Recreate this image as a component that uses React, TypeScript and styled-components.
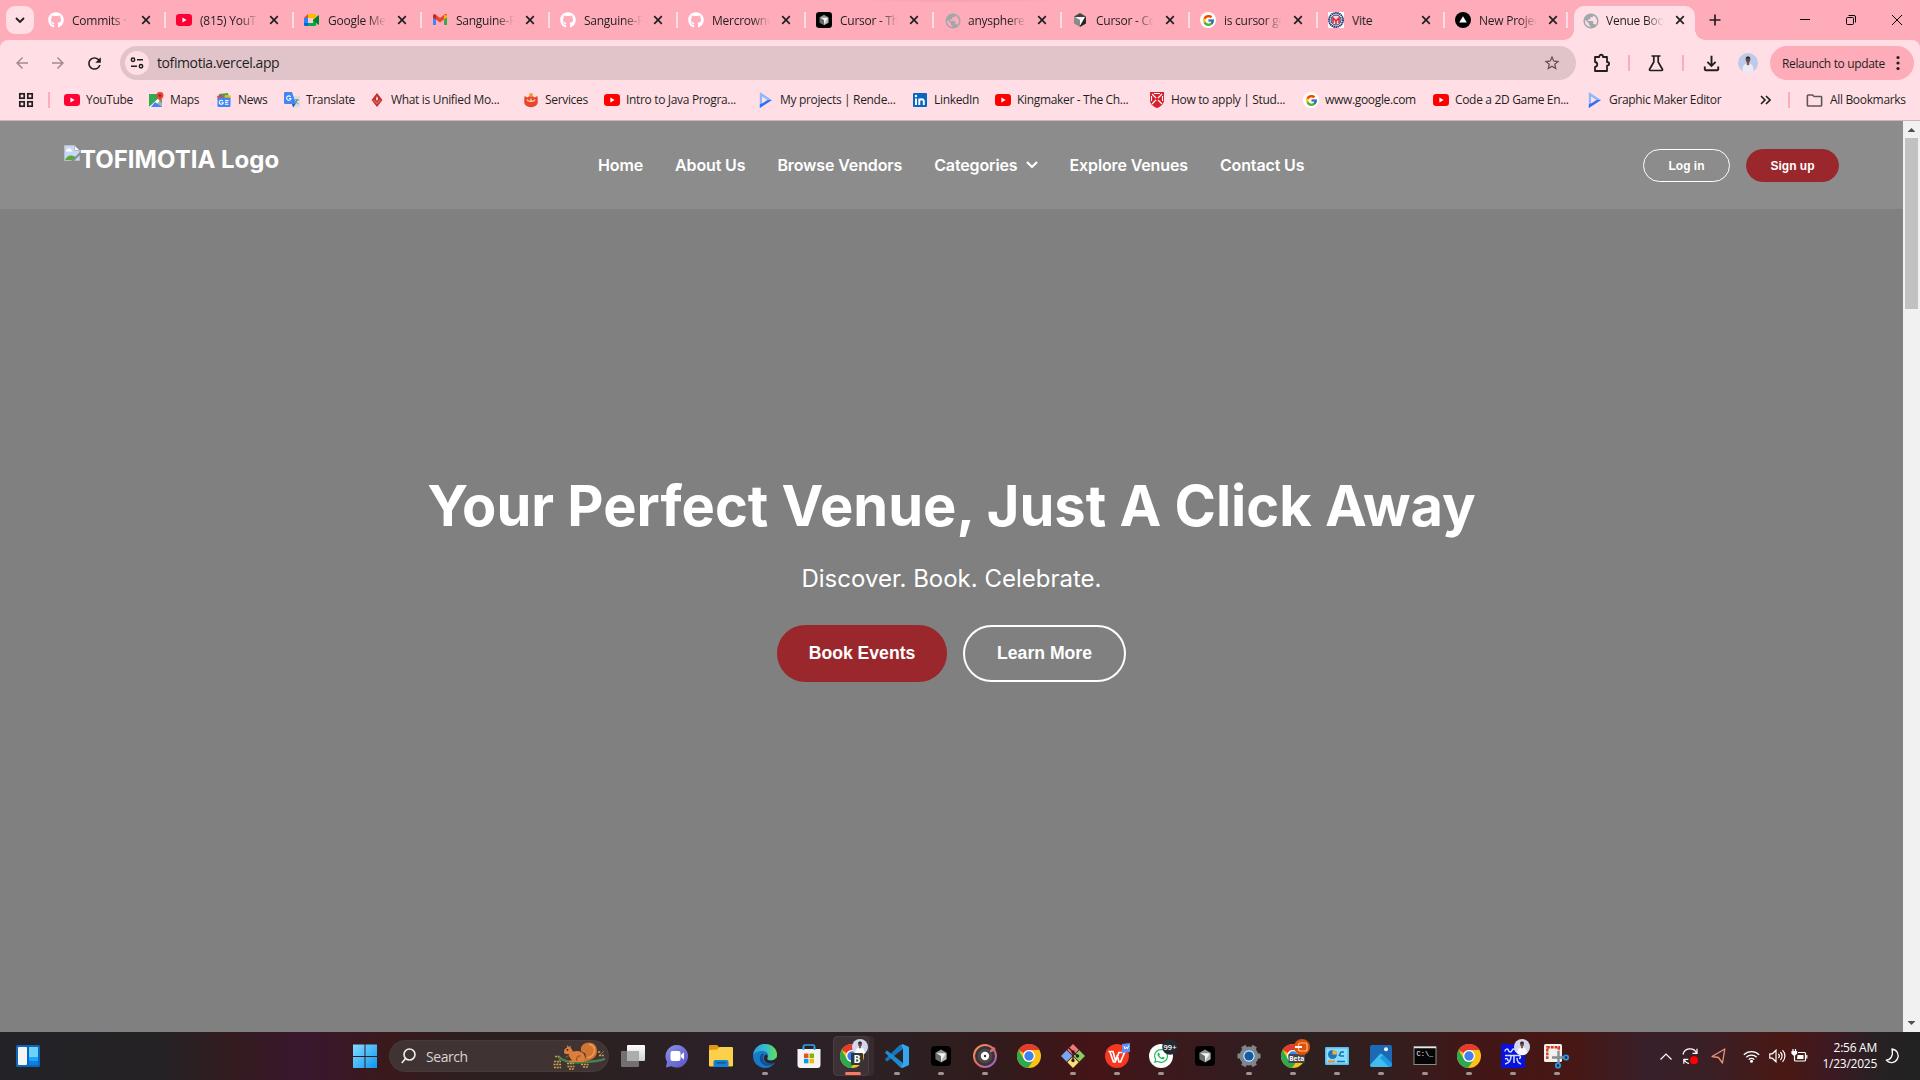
import React from "react";
import styled, { createGlobalStyle, css } from "styled-components";
import { FaGithub, FaWhatsapp } from "react-icons/fa";
import { FcGoogle } from "react-icons/fc";
import {
  MdArrowBack,
  MdArrowForward,
  MdOutlineFileDownload,
  MdOutlineFolder,
  MdPublic,
  MdRefresh,
  MdStarBorder,
} from "react-icons/md";

const UI = `"Segoe UI", "Open Sans", "Noto Sans", sans-serif`;
const ARIAL = `"Liberation Sans", Arial, sans-serif`;

const Global = createGlobalStyle`
  * { box-sizing: border-box; }
  body { margin: 0; overflow: hidden; font-family: ${UI}; }
  svg { display: block; flex: none; }
`;

const Screen = styled.div`
  width: 1920px;
  height: 1080px;
  display: flex;
  flex-direction: column;
  overflow: hidden;
`;

/* ---------- tab strip ---------- */

const TabStrip = styled.div`
  height: 40px;
  flex: none;
  display: flex;
  align-items: stretch;
  padding-left: 6px;
  color: #1f1f1f;
  background:
    radial-gradient(ellipse 112px 3px at 960px 0, #f59fae, transparent) no-repeat,
    #ffacba;
`;

const TabSearch = styled.button`
  width: 28px;
  height: 28px;
  margin: 6px 3px 0 0;
  padding: 0;
  border: 0;
  border-radius: 9px;
  background: #ffdfe5;
  display: grid;
  place-items: center;
`;

const TabItem = styled.div<{ $w: number; $active?: boolean }>`
  width: ${(p) => p.$w}px;
  height: ${(p) => (p.$active ? 34 : 40)}px;
  flex: none;
  display: flex;
  align-items: center;
  padding: 0 8px 0 ${(p) => (p.$active ? 8 : 11)}px;
  position: relative;
  ${(p) =>
    p.$active
      ? css`
          margin: 6px 0 0 7px;
          padding-bottom: 6px;
          border-radius: 10px 10px 0 0;
          background: #ffdfe5;
          &::before,
          &::after {
            content: "";
            position: absolute;
            bottom: 0;
            width: 10px;
            height: 10px;
          }
          &::before {
            left: -10px;
            background: radial-gradient(circle at 0 0, transparent 9.5px, #ffdfe5 10px);
          }
          &::after {
            right: -10px;
            background: radial-gradient(circle at 100% 0, transparent 9.5px, #ffdfe5 10px);
          }
        `
      : css`
          &::after {
            content: "";
            position: absolute;
            right: -1px;
            top: 12px;
            width: 2px;
            height: 16px;
            background: #ffdfe5;
          }
        `}
`;

const TabTitle = styled.span<{ $fade: boolean }>`
  width: 60px;
  margin: 1px 9px 0 8px;
  flex: none;
  white-space: nowrap;
  font-size: 12px;
  letter-spacing: -0.25px;
  line-height: 18px;
  mask-image: ${(p) =>
    p.$fade ? "linear-gradient(90deg, #000 40px, transparent 58px)" : "none"};
`;

const WindowButtons = styled.div`
  margin-left: auto;
  display: flex;
  align-items: center;
`;

const WindowButton = styled.span`
  width: 46px;
  height: 40px;
  display: grid;
  place-items: center;
`;

const NewTab = styled.span`
  width: 20px;
  margin-left: 10px;
  display: grid;
  place-items: center;
`;

/* ---------- toolbar ---------- */

const Chrome = styled.div`
  height: 81px;
  flex: none;
  background: #ffdfe5;
  border-bottom: 1px solid #cfb0b8;
  color: #1f1f1f;
  border-radius: 8px 8px 0 0;
`;

const ChromeBack = styled.div`
  background: linear-gradient(#ffacba 10px, #ffdfe5 10px);
`;

const Toolbar = styled.div`
  height: 46px;
  display: flex;
  align-items: center;
`;

const ToolSlot = styled.span<{ $w: number; $dim?: boolean }>`
  width: ${(p) => p.$w}px;
  flex: none;
  display: grid;
  place-items: center;
  color: ${(p) => (p.$dim ? "#a28c91" : "#1f1f1f")};
`;

const Omnibox = styled.div`
  width: 1456px;
  height: 34px;
  margin-left: 8px;
  padding: 0 15px 0 5px;
  border-radius: 17px;
  background: #e1c4c9;
  display: flex;
  align-items: center;
  flex: none;
`;

const SiteChip = styled.span`
  width: 24px;
  height: 24px;
  border-radius: 50%;
  background: #ffdfe5;
  display: grid;
  place-items: center;
`;

const Url = styled.span`
  flex: 1;
  margin: 0 0 1px 8px;
  font-size: 14px;
  letter-spacing: -0.4px;
`;

const Divider = styled.span`
  width: 2px;
  height: 16px;
  background: #ffacba;
  flex: none;
`;

const Relaunch = styled.div`
  width: 144px;
  height: 34px;
  margin-left: 10px;
  padding: 0 14px 0 12px;
  border-radius: 17px;
  background: #ffacba;
  display: flex;
  align-items: center;
  justify-content: space-between;
  font-size: 12px;
  letter-spacing: -0.35px;
  white-space: nowrap;
`;

const BookmarkBar = styled.div`
  height: 28px;
  display: flex;
  align-items: center;
  padding-left: 18px;
`;

const BookmarkList = styled.div`
  display: flex;
  margin-left: 14px;
  width: 1688px;
`;

const Bookmark = styled.div<{ $w?: number }>`
  width: ${(p) => (p.$w ? p.$w + "px" : "auto")};
  flex: none;
  display: flex;
  align-items: center;
  gap: 6px;
  font-size: 12px;
  letter-spacing: -0.33px;
  line-height: 18px;
  white-space: nowrap;
`;

const IconBox = styled.span`
  width: 16px;
  height: 16px;
  flex: none;
  display: grid;
  place-items: center;
`;

const WhiteDisc = styled.span`
  width: 16px;
  height: 16px;
  border-radius: 50%;
  background: #fff;
  display: grid;
  place-items: center;
`;

/* ---------- web page ---------- */

const Viewport = styled.div`
  height: 911px;
  flex: none;
  display: flex;
`;

const Page = styled.main`
  width: 1903px;
  display: flex;
  flex-direction: column;
  background: #808080;
  color: #fff;
  font-family: Inter, sans-serif;
`;

const SiteHeader = styled.header`
  height: 88px;
  flex: none;
  padding: 0 64px;
  background: #8c8c8c;
  display: grid;
  grid-template-columns: 534px 1fr auto;
  align-items: center;
`;

const Brand = styled.div`
  height: 40px;
  display: flex;
  align-items: flex-start;
  font-size: 24px;
  font-weight: 700;
  line-height: 29px;
  white-space: nowrap;
`;

const SiteNav = styled.nav`
  display: flex;
  gap: 32px;
`;

const NavLink = styled.a`
  display: flex;
  align-items: center;
  gap: 8px;
  font-size: 16px;
  font-weight: 600;
  line-height: 20px;
  letter-spacing: -0.13px;
`;

const Auth = styled.div`
  display: flex;
  gap: 16px;
  margin-top: 1px;
`;

const AuthButton = styled.button<{ $solid?: boolean }>`
  width: ${(p) => (p.$solid ? 93 : 87)}px;
  height: 33px;
  padding: 0;
  border-radius: 17px;
  border: 1px solid ${(p) => (p.$solid ? "#9a272b" : "#fff")};
  background: ${(p) => (p.$solid ? "#9a272b" : "transparent")};
  color: #fff;
  font: 600 12px ${ARIAL};
`;

const Hero = styled.section`
  flex: 1;
  display: flex;
  flex-direction: column;
  align-items: center;
  padding-top: 263px;
`;

const HeroTitle = styled.h1`
  margin: 0;
  font-size: 56px;
  font-weight: 700;
  line-height: 68px;
  white-space: nowrap;
`;

const HeroText = styled.p`
  margin: 24px 0 31px;
  font-size: 24px;
  line-height: 30px;
`;

const HeroActions = styled.div`
  display: flex;
  gap: 16px;
`;

const HeroButton = styled.button<{ $solid?: boolean }>`
  width: ${(p) => (p.$solid ? 170 : 163)}px;
  height: 57px;
  padding: 0;
  border-radius: 29px;
  border: 2px solid ${(p) => (p.$solid ? "#9a272b" : "#fff")};
  background: ${(p) => (p.$solid ? "#9a272b" : "transparent")};
  color: #fff;
  font: 600 17.6px ${ARIAL};
`;

const ScrollTrack = styled.div`
  width: 17px;
  background: #f1f1f1;
  display: flex;
  flex-direction: column;
  align-items: center;
`;

const ScrollThumb = styled.div`
  width: 13px;
  height: 171px;
  background: #c1c1c1;
  margin-bottom: auto;
`;

const ScrollArrow = styled.div<{ $down?: boolean }>`
  width: 17px;
  height: 17px;
  display: grid;
  place-items: center;
  transform: ${(p) => (p.$down ? "scaleY(-1)" : "none")};
`;

/* ---------- taskbar ---------- */

const Taskbar = styled.footer`
  height: 48px;
  flex: none;
  display: flex;
  align-items: center;
  color: #fff;
  background: linear-gradient(
    90deg, #232226 0, #242225 160px, #331b1f 235px, #39172e 305px, #3a191c 385px,
    #2c1f20 470px, #2b2022 620px, #2b212a 760px, #2c2022 900px, #331a1b 1010px,
    #441417 1090px, #391a1d 1190px, #2e2020 1300px, #351d1d 1400px, #421617 1480px,
    #471713 1570px, #38202a 1650px, #3a1f25 1710px, #491813 1785px, #3d1923 1830px,
    #262123 1880px, #222 1920px
  );
`;

const Widgets = styled.span`
  width: 337px;
  padding: 0 0 0 16px;
`;

const StartSlot = styled.span`
  width: 36px;
  padding-left: 16px;
  flex: none;
  margin-right: 16px;
`;

const SearchBox = styled.div`
  width: 220px;
  height: 32px;
  flex: none;
  padding: 0 2px 0 11px;
  border-radius: 16px;
  border: 1px solid #483a3b;
  background: #403334;
  display: flex;
  align-items: center;
  font-size: 14px;
  letter-spacing: -0.45px;
  color: #d9d4d4;
  gap: 10px;
  & > svg:last-child {
    margin-left: auto;
  }
`;

const Apps = styled.div`
  display: flex;
  margin-left: 2px;
  height: 48px;
`;

const AppSlot = styled.div<{ $active?: boolean }>`
  width: 44px;
  height: 48px;
  position: relative;
  display: grid;
  place-items: center;
  ${(p) =>
    p.$active &&
    css`
      &::before {
        content: "";
        position: absolute;
        inset: 4px 6px 4px 2px;
        border-radius: 4px;
        border: 1px solid #4b3e43;
        background: #3d3136;
        box-shadow: 5px 0 0 0 #372b30;
      }
    `}
  & > svg {
    position: relative;
  }
`;

const Running = styled.i<{ $active?: boolean }>`
  position: absolute;
  bottom: 5px;
  left: ${(p) => (p.$active ? 14 : 19)}px;
  width: ${(p) => (p.$active ? 16 : 6)}px;
  height: 3px;
  border-radius: 2px;
  background: ${(p) => (p.$active ? "#f77b63" : "#a09496")};
`;

const Tray = styled.div`
  margin-left: auto;
  padding-right: 20px;
  display: flex;
  align-items: center;
`;

const TraySlot = styled.span<{ $w: number }>`
  width: ${(p) => p.$w}px;
  flex: none;
  display: grid;
  place-items: center;
`;

const Clock = styled.div`
  width: 60px;
  text-align: right;
  font-size: 12px;
  line-height: 16px;
  letter-spacing: -0.25px;
  margin-right: 8px;
  white-space: nowrap;
`;

/* ---------- drawings ---------- */

const CloseX = () => (
  <svg width="10" height="10" viewBox="0 0 10 10" stroke="#1f1f1f" strokeWidth="1.7">
    <path d="M1.2 1.2l7.6 7.6M8.8 1.2L1.2 8.8" />
  </svg>
);

const PuzzleIcon = () => (
  <svg width="18" height="20" viewBox="0 0 18 20" fill="none" stroke="#1f1f1f" strokeWidth="1.8" strokeLinejoin="round">
    <path d="M2 4h4.200c0-3 3.800-3 3.800 0h4v5c2.800 0 2.800 3.600 0 3.600V18H2v-4.200c3-.4 3-4.400 0-4.800z" />
  </svg>
);

const FlaskIcon = () => (
  <svg width="16" height="18" viewBox="0 0 16 18" fill="none" stroke="#1f1f1f" strokeWidth="1.700" strokeLinejoin="round">
    <path d="M3.500 2h9M5.800 2v6L1.600 15.200c-.4.800 0 1.300.8 1.300h11.200c.8 0 1.200-.5.8-1.300L10.200 8V2" />
  </svg>
);

const YouTubeIcon = ({ c = "#ff0033" }: { c?: string }) => (
  <svg width="16" height="16" viewBox="0 0 16 16">
    <rect y="2" width="16" height="12" rx="3.2" fill={c} />
    <path d="M6.4 5.5v5l4.2-2.5z" fill="#fff" />
  </svg>
);

const MeetIcon = () => (
  <svg width="16" height="16" viewBox="0 0 16 16">
    <path d="M0 6l4-4v4z" fill="#ea4335" />
    <path d="M0 6h4v5H0z" fill="#2684fc" />
    <path d="M0 11h4v3H1.2A1.2 1.2 0 0 1 0 12.8z" fill="#0066da" />
    <path d="M4 2h7a1.2 1.2 0 0 1 1.2 1.2V8L9 6H4z" fill="#ffba00" />
    <path d="M4 14v-3h5V8l3.2-2v6.800a1.2 1.2 0 0 1-1.200 1.200z" fill="#00ac47" />
    <path d="M9 8l5-4.600c.5-.4 1-.1 1 .4v8.400c0 .5-.5.8-1 .4z" fill="#00832d" />
    <path d="M4 6h5v5H4z" fill="#ffc9d2" />
  </svg>
);

const GmailIcon = () => (
  <svg width="16" height="16" viewBox="0 0 16 16">
    <path d="M1 4v9h3V6z" fill="#4285f4" />
    <path d="M15 4v9h-3V6z" fill="#34a853" />
    <path d="M1 3.500C1 2 2.700 1.800 3.600 2.500L8 6l4.400-3.500C13.300 1.800 15 2 15 3.500V5l-7 5.400L1 5z" fill="#ea4335" />
    <path d="M1 3.600V5.200l3 2.200V3z" fill="#c5221f" />
    <path d="M15 3.600V5.200l-3 2.200V3z" fill="#fbbc04" />
  </svg>
);

const CursorIcon = ({ s = 16, boxed = true }: { s?: number; boxed?: boolean }) => (
  <svg width={s} height={s} viewBox="0 0 20 20">
    {boxed && <rect width="20" height="20" rx="4" fill="#000" />}
    <g transform={boxed ? "" : "translate(-3.300 -3.300) scale(1.330)"}>
      <path d="M10 3.500l5.600 3.200L10 10 4.400 6.700z" fill={boxed ? "#8f8f8f" : "#444"} />
      <path d="M4.400 6.700L10 10v6.500l-5.600-3.200z" fill={boxed ? "#6c6c6c" : "#8a8a8a"} />
      <path d="M15.600 6.700v6.600L10 16.500V10z" fill={boxed ? "#b5b5b5" : "#222"} />
      <path d="M5.200 7.200h9.600L10 15.300V10z" fill="#f4f4f4" />
    </g>
  </svg>
);

const CrestIcon = () => (
  <svg width="16" height="16" viewBox="0 0 16 16">
    <rect width="16" height="16" fill="#fff" />
    <circle cx="8" cy="8" r="7" fill="#fff" stroke="#25366f" strokeWidth="2" strokeDasharray="1.500 .5" />
    <circle cx="8" cy="8" r="5" fill="#f1d6dc" stroke="#25366f" />
    <path d="M5 11V6l3 3 3-3v5M8 9v3" fill="none" stroke="#d8222f" strokeWidth="1.500" />
  </svg>
);

const VercelIcon = () => (
  <svg width="16" height="16" viewBox="0 0 16 16">
    <circle cx="8" cy="8" r="8" fill="#000" />
    <path d="M8 4.300l3.800 6.300H4.200z" fill="#fff" />
  </svg>
);

const MapsIcon = () => (
  <svg width="16" height="16" viewBox="0 0 16 16">
    <path d="M1 2h13v13H1z" fill="#34a853" />
    <path d="M1 15L14 3v4L6 15z" fill="#fff" />
    <path d="M6 15l6-6 2 2v4z" fill="#a8b0b8" />
    <path d="M7 10l7 5H3z" fill="#4285f4" />
    <path d="M12 0a3.500 3.500 0 0 0-3.500 3.600C8.500 6 11 7 12 10c1-3 3.500-4 3.500-6.400A3.500 3.500 0 0 0 12 0z" fill="#ea4335" />
    <circle cx="12" cy="3.600" r="1.200" fill="#8d1f17" />
  </svg>
);

const NewsIcon = () => (
  <svg width="16" height="16" viewBox="0 0 16 16">
    <path d="M3 2l9-1 1 5H3z" fill="#34a853" />
    <path d="M1 4l5-1.500L8 8H2z" fill="#ea4335" />
    <path d="M15 3.500L9 3 8 8h6z" fill="#fbbc04" />
    <rect x="1.500" y="5.500" width="13" height="9.500" rx="1" fill="#4285f4" />
    <path d="M7 9.300a2 2 0 1 0 .2 1.500H5.500M9 8.600h3.500M9 10.500h2.800M9 12.300h3.500" stroke="#fff" fill="none" strokeWidth="1.100" />
  </svg>
);

const TranslateIcon = () => (
  <svg width="16" height="16" viewBox="0 0 16 16">
    <path d="M7 4h8a1 1 0 0 1 1 1v10.500H9z" fill="#dadce0" />
    <path d="M0 1a1 1 0 0 1 1-1h7l4 12H1a1 1 0 0 1-1-1z" fill="#4285f4" />
    <path d="M8 12h3.500L9 15.500z" fill="#1a56c4" />
    <path d="M6.600 4.800a2.200 2.200 0 1 0 .4 1.700H5" stroke="#fff" fill="none" strokeWidth="1.100" />
    <path d="M10.500 8h4.500M12.800 7v1c0 2-1 3.500-2 4M11.500 9c.5 1.500 1.500 2.500 3 3" stroke="#607d8b" fill="none" strokeWidth=".9" />
  </svg>
);

const DiamondIcon = () => (
  <svg width="16" height="16" viewBox="0 0 16 16">
    <path d="M8 1l5.500 7L8 15 2.500 8z" fill="#c52e2b" />
    <path d="M8 4l1 3-1 2-1-2z" fill="#fff" />
    <path d="M4.500 8L8 11.500 11.500 8" stroke="#f3b2ae" fill="none" strokeWidth=".8" />
  </svg>
);

const ServicesIcon = () => (
  <svg width="16" height="16" viewBox="0 0 16 16">
    <path d="M1.500 4l3 1.500L8 3l3.500 2.500 3-1.500.3 6c0 3-3 5.200-6.800 5.200S1.200 13 1.200 10z" fill="#e8452b" />
    <circle cx="8" cy="3" r="2" fill="#f59a3b" />
    <path d="M4 7.500c1 2.500 7 2.500 8 0M8 6.500v3" stroke="#ffd0c4" strokeWidth="1.200" fill="none" />
  </svg>
);

const PlayIcon = () => (
  <svg width="16" height="16" viewBox="0 0 16 16">
    <path d="M1.800 0L14 8 1.800 16z" fill="#8fb8fa" />
    <path d="M14 8L1.800 16v-3.500L9 8z" fill="#2f6ff2" />
    <path d="M4 4.500L9.500 8 4 11.500z" fill="#ffdfe5" />
  </svg>
);

const LinkedInIcon = () => (
  <svg width="16" height="16" viewBox="0 0 16 16">
    <rect x="1" y="1" width="14" height="14" rx="1" fill="#0a66c2" />
    <path d="M4 6.500V13M7.300 13V6.500M7.300 9.500c0-3 4.500-3 4.500 0V13" stroke="#fff" strokeWidth="1.900" fill="none" />
    <circle cx="4" cy="4" r="1.200" fill="#fff" />
  </svg>
);

const ShieldIcon = () => (
  <svg width="16" height="16" viewBox="0 0 16 16">
    <path d="M1 0h14v8c0 4-3 6.500-7 8-4-1.500-7-4-7-8z" fill="#d3222e" />
    <path d="M3 2l10 10M13 2L3 12M5 1.500h6M2.500 4v5M13.500 4v5" stroke="#fff" strokeWidth="1.100" />
    <circle cx="8" cy="7" r="1.500" fill="#d3222e" />
  </svg>
);

const Avatar = ({ s = 20 }: { s?: number }) => (
  <svg width={s} height={s} viewBox="0 0 20 20">
    <circle cx="10" cy="10" r="10" fill="#bccbe9" />
    <path d="M4.500 18.300C4.500 12 6.500 10.500 10 10.500s5.500 1.500 5.500 7.800a10 10 0 0 1-11 0z" fill="#e9eaf3" />
    <path d="M8.800 8.500h2.400v2.800L10 12.500l-1.200-1.200z" fill="#80584b" />
    <ellipse cx="10" cy="6.300" rx="2.300" ry="3.100" fill="#6a4a43" />
    <path d="M7.700 5.500a2.400 2.500 0 0 1 4.600 0z" fill="#2c2426" />
  </svg>
);

const ChromeDisc = () => (
  <g>
    <circle cx="12" cy="12" r="12" fill="#fbc116" />
    <path d="M1.600 6A12 12 0 0 1 22.400 6H12a6 6 0 0 0-5.200 3z" fill="#e33b2e" />
    <path d="M1.600 6l5.200 9A6 6 0 0 0 12 18l-.6 0L11 24A12 12 0 0 1 1.600 6z" fill="#2da94f" />
    <path d="M11 24l6.200-9A6 6 0 0 1 12 18L8 17z" fill="#2da94f" />
    <circle cx="12" cy="12" r="6" fill="#fff" />
    <circle cx="12" cy="12" r="4.700" fill="#3f7ff0" />
  </g>
);

const ChromeIcon = () => (
  <svg width="24" height="24" viewBox="0 0 24 24">
    <ChromeDisc />
  </svg>
);

/* 44x48 canvas so that badges may overhang the 24px glyph at (10,12) */
const Badged = ({ children }: { children: React.ReactNode }) => (
  <svg width="44" height="48" viewBox="0 0 44 48">
    {children}
  </svg>
);

const PersonBadge = ({ x, y }: { x: number; y: number }) => (
  <g transform={`translate(${x} ${y}) scale(.8)`}>
    <circle cx="10" cy="10" r="10" fill="#d3d7ee" />
    <path d="M4 18c0-5 2-7.500 6-7.500s6 2.500 6 7.500a10 10 0 0 1-12 0z" fill="#fbfbff" />
    <path d="M8.800 8h2.400v3L10 12.200 8.800 11z" fill="#80584b" />
    <ellipse cx="10" cy="6.300" rx="2.400" ry="3.200" fill="#6a4a43" />
    <path d="M7.600 5.500a2.400 2.500 0 0 1 4.800 0z" fill="#2c2426" />
  </g>
);

const TaskViewIcon = () => (
  <svg width="24" height="24" viewBox="0 0 24 24">
    <defs>
      <linearGradient id="tv" x1="0" y1="0" x2="0" y2="1">
        <stop offset="0" stopColor="#fff" />
        <stop offset="1" stopColor="#cfcfcf" />
      </linearGradient>
    </defs>
    <rect x="6" y="1" width="18" height="16" rx="1" fill="url(#tv)" />
    <rect x="0" y="7" width="18" height="16" rx="1" fill="#727071" />
    <path d="M6 7h12v10H6z" fill="#adadad" />
  </svg>
);

const ChatIcon = () => (
  <svg width="24" height="24" viewBox="0 0 24 24">
    <defs>
      <linearGradient id="ct" x1="0" y1="0" x2="1" y2="1">
        <stop offset="0" stopColor="#8a94e6" />
        <stop offset="1" stopColor="#5b51c9" />
      </linearGradient>
    </defs>
    <path d="M12 1a11.300 11.300 0 1 1-5.500 21.300L.8 23.500l1.300-5.500A11.300 11.300 0 0 1 12 1z" fill="url(#ct)" />
    <rect x="5.500" y="7" width="10" height="10" rx="2" fill="#fff" />
    <path d="M16 11l3-2.800v7.600L16 13z" fill="#fff" />
  </svg>
);

const ExplorerIcon = () => (
  <svg width="24" height="24" viewBox="0 0 24 24">
    <path d="M0 2a1 1 0 0 1 1-1h7l2 2v4H0z" fill="#e09a10" />
    <path d="M0 6l8-.5L10.500 3H23a1 1 0 0 1 1 1v17.500a1 1 0 0 1-1 1H1a1 1 0 0 1-1-1z" fill="#fcd04b" />
    <path d="M4.500 23v-5a2 2 0 0 1 2-2h11a2 2 0 0 1 2 2v5z" fill="#1680d2" />
    <path d="M7.500 18.800h9" stroke="#0d5797" strokeWidth="1.500" />
  </svg>
);

const EdgeIcon = () => (
  <svg width="24" height="24" viewBox="0 0 24 24">
    <defs>
      <linearGradient id="eg" x1="0" y1=".3" x2="1" y2=".3">
        <stop offset="0" stopColor="#2a9fde" />
        <stop offset=".55" stopColor="#36bfc8" />
        <stop offset="1" stopColor="#69de4b" />
      </linearGradient>
    </defs>
    <circle cx="12" cy="12" r="12" fill="#1a78c9" />
    <path d="M.1 11C1 4.500 6 0 12 0c7 0 12 5 12 10.500 0 4-3 6-6 6-3.500 0-4.500-1.500-3.600-2.700 2-3.300-.4-6.800-4.900-6.800C5 7 1.200 9 .1 11z" fill="url(#eg)" />
    <path d="M9.500 9.500c-4 2-4 9.500 2.500 12 4 1 8-.5 10-3-6 2.500-12 .5-12-5 0-2 1-3 1-3z" fill="#124f93" />
    <path d="M14.400 13.800c-.8 1.200.2 2.900 3.600 2.700 2.300 0 4.400-1.200 5.500-3.300l.5 4-1.600 1.600c-5 2-11.400.2-11.400-4.800 0-2 1.200-3.500 2.500-3.500 1.200.8 1.600 2 .9 3.300z" fill="#2a2129" />
  </svg>
);

const StoreIcon = () => (
  <svg width="24" height="24" viewBox="0 0 24 24">
    <path d="M6.500 7V2.500a1.500 1.500 0 0 1 1.500-1.500h8a1.500 1.500 0 0 1 1.500 1.500V7" fill="none" stroke="#2ba6e8" strokeWidth="1.700" />
    <path d="M.5 5h23V21a3 3 0 0 1-3 3h-17a3 3 0 0 1-3-3z" fill="#f3f3f3" />
    <path d="M6.500 3v3M17.500 3v3" stroke="#2ba6e8" strokeWidth="1.700" />
    <path d="M7 9.500h4.400V14H7z" fill="#f04e1f" />
    <path d="M12.500 9.500H17V14h-4.500z" fill="#7db700" />
    <path d="M7 14.800h4.400v4.500H7z" fill="#00a1ea" />
    <path d="M12.500 14.800H17v4.500h-4.500z" fill="#fcb400" />
  </svg>
);

const CodeIcon = () => (
  <svg width="24" height="24" viewBox="0 0 24 24">
    <path d="M18 5L2 17.500l-1.800-1.600v-1L15.500.3z" fill="#1377bd" />
    <path d="M18 19L2 6.500.2 8v1.100L16 24z" fill="#1b8bd2" />
    <path d="M17.500 0L24 3v18l-6.500 3c-1 0-1.500-.6-1.500-1.500L18 19V5l-2-3.500z" fill="#35a5ef" />
  </svg>
);

const MusicIcon = () => (
  <svg width="24" height="24" viewBox="0 0 24 24">
    <defs>
      <linearGradient id="mu" x1="0" y1="0" x2="1" y2="1">
        <stop offset="0" stopColor="#f29a55" />
        <stop offset=".5" stopColor="#e26863" />
        <stop offset="1" stopColor="#8b63d8" />
      </linearGradient>
    </defs>
    <circle cx="12" cy="12" r="11" fill="#383236" stroke="url(#mu)" strokeWidth="2" />
    <circle cx="12" cy="12" r="7.500" fill="#4b4649" />
    <circle cx="12" cy="12" r="4.200" fill="#fff" />
    <circle cx="12" cy="12" r="1.200" fill="#333" />
    <path d="M17 7c3 0 3.500-2 4.500-3.500" stroke="#d0707f" strokeWidth="2.500" fill="none" />
  </svg>
);

const GitIcon = () => (
  <svg width="24" height="24" viewBox="0 0 24 24">
    <path d="M12 0l5.700 5.700L12 11.400 6.300 5.700z" fill="#ee7b76" />
    <path d="M5.700 6.300l5.700 5.700-5.700 5.700L0 12z" fill="#78a6f6" />
    <path d="M18.300 6.300L24 12l-5.700 5.700-5.700-5.700z" fill="#86cf62" />
    <path d="M12 12.600l5.700 5.700L12 24l-5.700-5.700z" fill="#f9e07a" />
    <path d="M8 4l4 4v9M12 8l4.500 4" stroke="#351719" strokeWidth="1.300" fill="none" />
    <circle cx="12" cy="8" r="1.700" fill="#351719" />
    <circle cx="12" cy="16.500" r="1.700" fill="#351719" />
    <circle cx="16.500" cy="12" r="1.700" fill="#351719" />
  </svg>
);

const WpsIcon = () => (
  <Badged>
    <circle cx="22" cy="24" r="12" fill="#f5381f" />
    <path d="M13.500 19.500H18l2.500 9 3.500-8h5.500l-4 9.500h-1.500L22 23" fill="none" stroke="#fff" strokeWidth="1.700" />
    <path d="M15 20l3.500 10H20l3-7" fill="none" stroke="#fff" strokeWidth="1.700" />
    <path d="M27 12l8-1v9l-8 1z" fill="#5e8df5" />
    <path d="M29 14l1 3 1.500-2 1 2 1-3.500" fill="none" stroke="#fff" />
  </Badged>
);

const WhatsAppIcon = () => (
  <Badged>
    <circle cx="22" cy="24" r="12" fill="#fff" />
    <FaWhatsapp x="14" y="16" width="16" height="16" color="#20b858" />
    <circle cx="31" cy="15" r="7.800" fill="#252a31" />
    <text x="31" y="17.800" fontSize="7.500" fontWeight="600" fill="#fff" textAnchor="middle" fontFamily="Open Sans">99+</text>
  </Badged>
);

const SettingsIcon = () => (
  <svg width="24" height="24" viewBox="0 0 24 24">
    <circle cx="12" cy="12" r="9.500" fill="#7c8790" />
    <g stroke="#7c8790" strokeWidth="5">
      <path d="M.5 12h23" />
      <path d="M6.300 2l11.400 20" />
      <path d="M17.700 2L6.300 22" />
    </g>
    <circle cx="12" cy="12" r="5.700" fill="#e5e9ec" />
    <circle cx="12" cy="12" r="4.600" fill="#0c5ca8" />
  </svg>
);

const ChromeProfileIcon = () => (
  <Badged>
    <g transform="translate(9 12)"><ChromeDisc /></g>
    <PersonBadge x={21} y={7} />
    <rect x="20" y="21" width="12" height="12" rx="1" fill="#30363b" />
    <text x="26" y="31" fontSize="10.500" fontWeight="700" fill="#fff" textAnchor="middle" fontFamily="Open Sans">B</text>
  </Badged>
);

const ChromeBetaIcon = () => (
  <Badged>
    <g transform="translate(10 12)"><ChromeDisc /></g>
    <rect x="17.500" y="22" width="16.500" height="9" rx="1" fill="#434548" />
    <text x="25.700" y="29" fontSize="6.500" fontWeight="700" fill="#fff" textAnchor="middle" fontFamily="Open Sans">Beta</text>
    <circle cx="31" cy="15" r="8" fill="#de5207" />
    <rect x="27.500" y="11" width="8.500" height="8" rx="2" fill="none" stroke="#ffb98b" strokeWidth="1.200" />
    <path d="M24 15h7" stroke="#fff" strokeWidth="2" />
  </Badged>
);

const ControlPanelIcon = () => (
  <svg width="24" height="24" viewBox="0 0 24 24">
    <rect y="3" width="24" height="18" rx="1" fill="#55bdf0" />
    <rect x="1.500" y="4.500" width="21" height="15" fill="#8cdcfb" />
    <circle cx="7.500" cy="10.500" r="4.500" fill="#1d77ba" />
    <path d="M7.500 10.500V6a4.500 4.500 0 0 1 4.500 4.500z" fill="#ffad32" />
    <path d="M3 17.500h7" stroke="#ef8a26" strokeWidth="2" />
    <path d="M12 17.500h8M14 12l2-4h3M15 12h4" stroke="#1572b5" strokeWidth="1.600" fill="none" />
  </svg>
);

const PhotosIcon = () => (
  <svg width="24" height="24" viewBox="0 0 24 24">
    <rect x="1" y="1" width="22" height="22" rx="2" fill="#1c69b5" />
    <path d="M1 21L10.500 10.500a2 2 0 0 1 3 0L23 20a3 3 0 0 1-3 3H3a2 2 0 0 1-2-2z" fill="#42bdf0" />
    <path d="M14 11l9 9a3 3 0 0 1-3 3l-9-9z" fill="#1b9be2" />
    <circle cx="17" cy="5.300" r="2" fill="#f5faff" />
  </svg>
);

const TerminalIcon = () => (
  <svg width="24" height="24" viewBox="0 0 24 24">
    <rect x="1" y="2.500" width="22" height="18" fill="#050505" stroke="#8c8c8c" />
    <path d="M1 3.500h22" stroke="#e6e6e6" strokeWidth="1.500" />
    <text x="3.500" y="11.500" fontSize="7" fill="#fff" fontFamily="Liberation Mono">C:\_</text>
  </svg>
);

const BlueAppIcon = () => (
  <Badged>
    <rect x="10" y="12" width="24" height="24" fill="#0a10dd" />
    <g fill="none" stroke="#cfe0ff" strokeWidth="1.500">
      <path d="M14 19.500c0-3 3-3 3.500-1s3 2 3.500 0 3-2 3.500 0 3 1.500 5 1.500" />
      <path d="M14 23.500h14c2 0 2 3 0 3M20 24c0 4-2 7-6 8M23 24v7M26 26c0 3 1 5 4 6M14 27c2-1 3 0 3 2" />
    </g>
    <PersonBadge x={23} y={7} />
  </Badged>
);

const SnipIcon = () => (
  <svg width="26" height="26" viewBox="0 0 26 26">
    <rect x="0" y="1" width="18" height="18" rx="1.500" fill="#f1f1f1" />
    <path d="M3.300 16V4.300h11.500V8" fill="none" stroke="#d83b14" strokeWidth="2.400" strokeDasharray="2.800 1" />
    <path d="M14.500 8v12M8 14.500h12" stroke="#878d94" strokeWidth="2.400" />
    <circle cx="14" cy="22.500" r="2.200" fill="none" stroke="#1d9fe8" strokeWidth="1.800" />
    <circle cx="22" cy="14.500" r="2.200" fill="none" stroke="#1d9fe8" strokeWidth="1.800" />
  </svg>
);

const SquirrelArt = () => (
  <svg width="54" height="30" viewBox="0 0 54 30">
    <path d="M7 16c4 5 16 6 26 5s16-1 19-3" stroke="#4b7f4c" strokeWidth="2.600" fill="none" strokeLinecap="round" />
    <path d="M5 24l4-8M47 15l5-5" stroke="#68805a" fill="none" />
    <path d="M29 20c5-1 5-4 4.500-7-1-2-3.500-1-4.500-3C28 5 32 1.500 37 1.500c5 0 8 3.500 8 8.500 0 6-5 8.500-9 9.500-2 .5-4 1.500-7 1.500z" fill="#cf7431" />
    <path d="M37 3.500c4 0 6 3 5.500 6.500S39 16 35.500 17" stroke="#ee9c55" strokeWidth="1.600" fill="none" />
    <path d="M12 10.500c0-2 1.800-3.600 3.200-4L15 4l2.200 2 1.300-1.600.3 2.800c1.600 1 1.400 2.600 2.200 3.300 5-1.500 12 0 12 6.500 0 2.500-1.500 4-3.500 4H18c-1 0-1-1.300.5-1.500l2-.3c-2-1.200-3.500-3-3.700-6.200H14c-1.200 0-2-.7-2-2.500z" fill="#dc7f3d" />
    <path d="M17 14.500l-3.500 2M25 20c-1.500-3 1-5.500 4-5" stroke="#a6531f" strokeWidth="1.200" fill="none" />
    <circle cx="15.500" cy="8.800" r=".9" fill="#24140d" />
    <g fill="none" stroke="#cfa343" strokeWidth="1.700" strokeDasharray="2 .8">
      <path d="M2 20.500h7M1.500 23.500h8M2 26.500h7" />
      <path d="M15 22.500h7M15.500 25.500h7M17 28h5" />
      <path d="M29 23.500h8M31 26h5" />
      <path d="M3 15.500h4M46 11h3M47 14.500h5" />
    </g>
  </svg>
);

/* ---------- data ---------- */

const gh = <FaGithub size={16} color="#fff" />;
const globe = <MdPublic size={18} color="#a0a8ab" />;
const google = <WhiteDisc><FcGoogle size={13} /></WhiteDisc>;

const tabs: { t: string; icon: React.ReactNode; w: number }[] = [
  { t: "Commits · F", icon: gh, w: 128 },
  { t: "(815) YouT", icon: <YouTubeIcon />, w: 128 },
  { t: "Google Me", icon: <MeetIcon />, w: 128 },
  { t: "Sanguine-F", icon: <GmailIcon />, w: 128 },
  { t: "Sanguine-F", icon: gh, w: 128 },
  { t: "Mercrowno", icon: gh, w: 128 },
  { t: "Cursor - Th", icon: <CursorIcon />, w: 128 },
  { t: "anysphere.", icon: globe, w: 128 },
  { t: "Cursor - Co", icon: <CursorIcon boxed={false} />, w: 128 },
  { t: "is cursor go", icon: google, w: 128 },
  { t: "Vite", icon: <CrestIcon />, w: 127 },
  { t: "New Projec", icon: <VercelIcon />, w: 123 },
];

const bookmarks: { t: string; icon: React.ReactNode; w: number }[] = [
  { t: "YouTube", icon: <YouTubeIcon />, w: 84 },
  { t: "Maps", icon: <MapsIcon />, w: 68 },
  { t: "News", icon: <NewsIcon />, w: 68 },
  { t: "Translate", icon: <TranslateIcon />, w: 85 },
  { t: "What is Unified Mo...", icon: <DiamondIcon />, w: 154 },
  { t: "Services", icon: <ServicesIcon />, w: 81 },
  { t: "Intro to Java Progra...", icon: <YouTubeIcon c="#f00" />, w: 154 },
  { t: "My projects | Rende...", icon: <PlayIcon />, w: 154 },
  { t: "LinkedIn", icon: <LinkedInIcon />, w: 83 },
  { t: "Kingmaker - The Ch...", icon: <YouTubeIcon c="#f00" />, w: 154 },
  { t: "How to apply | Stud...", icon: <ShieldIcon />, w: 154 },
  { t: "www.google.com", icon: google, w: 130 },
  { t: "Code a 2D Game En...", icon: <YouTubeIcon c="#f00" />, w: 154 },
  { t: "Graphic Maker Editor", icon: <PlayIcon />, w: 140 },
];

const apps: { icon: React.ReactNode; run?: boolean; active?: boolean }[] = [
  { icon: <TaskViewIcon /> },
  { icon: <ChatIcon /> },
  { icon: <ExplorerIcon /> },
  { icon: <EdgeIcon />, run: true },
  { icon: <StoreIcon /> },
  { icon: <ChromeProfileIcon />, run: true, active: true },
  { icon: <CodeIcon />, run: true },
  { icon: <CursorIcon s={20} />, run: true },
  { icon: <MusicIcon />, run: true },
  { icon: <ChromeIcon /> },
  { icon: <GitIcon />, run: true },
  { icon: <WpsIcon />, run: true },
  { icon: <WhatsAppIcon />, run: true },
  { icon: <CursorIcon s={20} /> },
  { icon: <SettingsIcon />, run: true },
  { icon: <ChromeBetaIcon />, run: true },
  { icon: <ControlPanelIcon />, run: true },
  { icon: <PhotosIcon />, run: true },
  { icon: <TerminalIcon />, run: true },
  { icon: <ChromeIcon />, run: true },
  { icon: <BlueAppIcon />, run: true },
  { icon: <SnipIcon />, run: true },
];

const BrowserTop = () => (
  <>
    <TabStrip>
      <TabSearch>
        <svg width="10" height="7" viewBox="0 0 10 7" fill="none" stroke="#1f1f1f" strokeWidth="1.900"><path d="M1 1l4 4 4-4" /></svg>
      </TabSearch>
      {tabs.map((tab, i) => (
        <TabItem key={i} $w={tab.w}>
          <IconBox>{tab.icon}</IconBox>
          <TabTitle $fade={tab.t.length > 4}>{tab.t}</TabTitle>
          <CloseX />
        </TabItem>
      ))}
      <TabItem $w={121} $active>
        <IconBox>{globe}</IconBox>
        <TabTitle $fade>Venue Boo</TabTitle>
        <CloseX />
      </TabItem>
      <NewTab>
        <svg width="12" height="12" viewBox="0 0 12 12" stroke="#1f1f1f" strokeWidth="1.700"><path d="M6 .5v11M.5 6h11" /></svg>
      </NewTab>
      <WindowButtons>
        <WindowButton>
          <svg width="10" height="10" viewBox="0 0 10 10" stroke="#000"><path d="M0 4.500h10" /></svg>
        </WindowButton>
        <WindowButton>
          <svg width="10" height="10" viewBox="0 0 10 10" fill="none" stroke="#000"><rect x=".5" y="2.500" width="7" height="7" rx="1" /><path d="M2.500 .5H8A1.500 1.500 0 0 1 9.500 2v5.500" /></svg>
        </WindowButton>
        <WindowButton>
          <svg width="10" height="10" viewBox="0 0 10 10" stroke="#000"><path d="M0 0l10 10M10 0L0 10" /></svg>
        </WindowButton>
      </WindowButtons>
    </TabStrip>
    <ChromeBack>
      <Chrome>
        <Toolbar>
          <ToolSlot $w={4} />
          <ToolSlot $w={36} $dim><MdArrowBack size={18} /></ToolSlot>
          <ToolSlot $w={36} $dim><MdArrowForward size={18} /></ToolSlot>
          <ToolSlot $w={36}><MdRefresh size={19} /></ToolSlot>
          <Omnibox>
            <SiteChip>
              <svg width="14" height="12" viewBox="0 0 14 12" fill="none" stroke="#1f1f1f" strokeWidth="1.500">
                <circle cx="3" cy="2.800" r="1.700" /><path d="M7 2.800h6M1 9.200h6" /><circle cx="11" cy="9.200" r="1.700" />
              </svg>
            </SiteChip>
            <Url>tofimotia.vercel.app</Url>
            <MdStarBorder size={18} color="#5b4e51" />
          </Omnibox>
          <ToolSlot $w={52}><PuzzleIcon /></ToolSlot>
          <Divider />
          <ToolSlot $w={52}><FlaskIcon /></ToolSlot>
          <Divider />
          <ToolSlot $w={54}><MdOutlineFileDownload size={23} /></ToolSlot>
          <ToolSlot $w={20}><Avatar /></ToolSlot>
          <ToolSlot $w={2} />
          <Relaunch>
            Relaunch to update
            <svg width="4" height="16" viewBox="0 0 4 16" fill="#1f1f1f"><circle cx="2" cy="2.500" r="1.600" /><circle cx="2" cy="8" r="1.600" /><circle cx="2" cy="13.500" r="1.600" /></svg>
          </Relaunch>
        </Toolbar>
        <BookmarkBar>
          <svg width="16" height="16" viewBox="0 0 16 16" fill="none" stroke="#1f1f1f" strokeWidth="1.700">
            <rect x="1.800" y="1.800" width="4.400" height="4.400" /><rect x="9.800" y="1.800" width="4.400" height="4.400" />
            <rect x="1.800" y="9.800" width="4.400" height="4.400" /><rect x="9.800" y="9.800" width="4.400" height="4.400" />
          </svg>
          <ToolSlot $w={14} />
          <Divider />
          <BookmarkList>
            {bookmarks.map((b) => (
              <Bookmark key={b.t} $w={b.w}><IconBox>{b.icon}</IconBox>{b.t}</Bookmark>
            ))}
          </BookmarkList>
          <ToolSlot $w={26}>
            <svg width="11" height="10" viewBox="0 0 11 10" fill="none" stroke="#1f1f1f" strokeWidth="1.600"><path d="M1 1l4 4-4 4M6 1l4 4-4 4" /></svg>
          </ToolSlot>
          <ToolSlot $w={10} />
          <Divider />
          <ToolSlot $w={15} />
          <Bookmark><MdOutlineFolder size={19} color="#5f5558" />All Bookmarks</Bookmark>
        </BookmarkBar>
      </Chrome>
    </ChromeBack>
  </>
);

const BrokenImage = () => (
  <svg width="16" height="16" viewBox="0 0 16 16">
    <path d="M.5 .5h10l5 5v10H.5z" fill="#c6d7f8" stroke="#b9bcc2" />
    <path d="M10.500 .5v5h5z" fill="#fff" stroke="#b9bcc2" />
    <path d="M2 6c0-2 2-1.500 2.500-2.500C6 3 7 4 7 5c1.500 0 1.500 1 1 1.500H2z" fill="#fff" />
    <path d="M1 15c1-3 4-5 7-4.500L12 12l-3 3z" fill="#57a93c" />
    <path d="M16 7L7 16h3l6-6z" fill="#8c8c8c" />
  </svg>
);

const Arrow = () => (
  <svg width="7" height="4" viewBox="0 0 7 4"><path d="M3.500 0L7 3.500V4H0v-.5z" fill="#505050" /></svg>
);

const Website = () => (
  <Viewport>
    <Page>
      <SiteHeader>
        <Brand><BrokenImage />TOFIMOTIA Logo</Brand>
        <SiteNav>
          <NavLink>Home</NavLink>
          <NavLink>About Us</NavLink>
          <NavLink>Browse Vendors</NavLink>
          <NavLink>
            Categories
            <svg width="12" height="8" viewBox="0 0 12 8" fill="none" stroke="#fff" strokeWidth="2.200"><path d="M1 1l5 5 5-5" /></svg>
          </NavLink>
          <NavLink>Explore Venues</NavLink>
          <NavLink>Contact Us</NavLink>
        </SiteNav>
        <Auth>
          <AuthButton>Log in</AuthButton>
          <AuthButton $solid>Sign up</AuthButton>
        </Auth>
      </SiteHeader>
      <Hero>
        <HeroTitle>Your Perfect Venue, Just A Click Away</HeroTitle>
        <HeroText>Discover. Book. Celebrate.</HeroText>
        <HeroActions>
          <HeroButton $solid>Book Events</HeroButton>
          <HeroButton>Learn More</HeroButton>
        </HeroActions>
      </Hero>
    </Page>
    <ScrollTrack>
      <ScrollArrow><Arrow /></ScrollArrow>
      <ScrollThumb />
      <ScrollArrow $down><Arrow /></ScrollArrow>
    </ScrollTrack>
  </Viewport>
);

const WindowsTaskbar = () => (
  <Taskbar>
    <Widgets>
      <svg width="24" height="22" viewBox="0 0 24 22">
        <rect width="24" height="22" rx="1.500" fill="#0d66bb" />
        <rect x="2" y="2" width="9" height="18" rx="1" fill="#f5f5f5" />
        <rect x="13" y="2" width="9" height="10" fill="#6bd2fb" />
        <rect x="13" y="12" width="9" height="4" fill="#1ca4f6" />
        <rect x="13" y="16" width="9" height="4" fill="#0a80e6" />
      </svg>
    </Widgets>
    <StartSlot>
      <svg width="24" height="24" viewBox="0 0 24 24">
        <defs>
          <linearGradient id="win" x1="0" y1="0" x2="1" y2="1">
            <stop offset="0" stopColor="#84dcff" /><stop offset="1" stopColor="#0c97f2" />
          </linearGradient>
        </defs>
        <path d="M0 .5h11.500V12H0zM12.500 .5H24V12H12.500zM0 13h11.500v11H0zM12.500 13H24v11H12.500z" fill="url(#win)" />
      </svg>
    </StartSlot>
    <SearchBox>
      <svg width="15" height="16" viewBox="0 0 15 16" fill="none" stroke="#f0eded" strokeWidth="1.600"><circle cx="8.500" cy="6.500" r="5.500" /><path d="M4.500 10.500L.8 15" /></svg>
      Search
      <SquirrelArt />
    </SearchBox>
    <Apps>
      {apps.map((a, i) => (
        <AppSlot key={i} $active={a.active}>
          {a.icon}
          {a.run && <Running $active={a.active} />}
        </AppSlot>
      ))}
    </Apps>
    <Tray>
      <TraySlot $w={22}>
        <svg width="12" height="7" viewBox="0 0 12 7" fill="none" stroke="#fff" strokeWidth="1.200"><path d="M.5 6.500L6 1l5.500 5.500" /></svg>
      </TraySlot>
      <TraySlot $w={26}>
        <svg width="17" height="17" viewBox="0 0 17 17" fill="none" stroke="#fff" strokeWidth="1.200">
          <path d="M1 6.500A7.200 7.200 0 0 1 14.500 5M15 .8V5.300h-4.500M1.800 15.800v-4.500h4.500M2 11.500a7 7 0 0 0 5 4" />
          <circle cx="12" cy="12.200" r="4" fill="#f00" stroke="none" />
        </svg>
      </TraySlot>
      <TraySlot $w={30}>
        <svg width="15" height="16" viewBox="0 0 15 16" fill="none" stroke="#e8947a" strokeWidth="1.300"><path d="M13.800 1L1 8.500l6.500 1L11.500 15z" strokeLinejoin="round" /></svg>
      </TraySlot>
      <TraySlot $w={36}>
        <svg width="17" height="13" viewBox="0 0 17 13" fill="none" stroke="#fff" strokeWidth="1.300">
          <path d="M.8 4.800a10.800 10.800 0 0 1 15.400 0M3.300 7.300a7.300 7.300 0 0 1 10.400 0M5.700 9.600a4 4 0 0 1 5.600 0" /><circle cx="8.500" cy="11.300" r="1.500" fill="#fff" stroke="none" />
        </svg>
      </TraySlot>
      <TraySlot $w={12}>
        <svg width="17" height="14" viewBox="0 0 17 14" fill="none" stroke="#fff" strokeWidth="1.200">
          <path d="M.8 4.800h2.500L7 1.200v11.600L3.300 9.200H.8zM9.300 4.800c1.200 1.200 1.200 3.200 0 4.400M11.400 3c2.200 2.200 2.200 5.800 0 8M13.500 1.200c3.200 3.200 3.200 8.400 0 11.600" />
        </svg>
      </TraySlot>
      <TraySlot $w={36}>
        <svg width="17" height="14" viewBox="0 0 17 14" fill="none" stroke="#fff" strokeWidth="1.200">
          <path d="M7 3.500h6.500a1 1 0 0 1 1 1v6.500a1 1 0 0 1-1 1h-9a1 1 0 0 1-1-1V7" /><path d="M6.500 6h6v4H6z" fill="#fff" stroke="none" /><path d="M15.800 6v3.500M2 0v3M4.500 0v3" /><path d="M1 2.500h4.500v2L3.300 6.500 1 4.500z" fill="#fff" />
        </svg>
      </TraySlot>
      <Clock>2:56 AM<br />1/23/2025</Clock>
      <svg width="15" height="16" viewBox="0 0 15 16" fill="none" stroke="#fff" strokeWidth="1.300"><path d="M7 1a6.800 6.800 0 1 1-5.800 11.200C5.500 12 8.500 8 7 1z" strokeLinejoin="round" /></svg>
    </Tray>
  </Taskbar>
);

export default function App() {
  return (
    <Screen>
      <Global />
      <BrowserTop />
      <Website />
      <WindowsTaskbar />
    </Screen>
  );
}
